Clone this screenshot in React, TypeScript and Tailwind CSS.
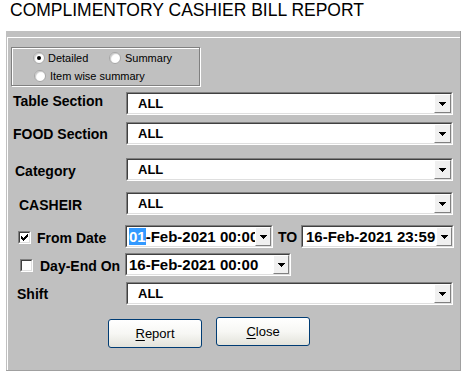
import React from "react";

const FONT = "font-['Liberation_Sans',Arial,sans-serif]";

function Arrow() {
  return (
    <svg width="7" height="4" viewBox="0 0 7 4" shapeRendering="crispEdges">
      <rect x="0" y="0" width="7" height="1" fill="#000" />
      <rect x="1" y="1" width="5" height="1" fill="#000" />
      <rect x="2" y="2" width="3" height="1" fill="#000" />
      <rect x="3" y="3" width="1" height="1" fill="#000" />
    </svg>
  );
}

function DropBtn({ className = "w-[17px]" }: { className?: string }) {
  return (
    <div
      className={`${className} h-full shrink-0 flex items-center justify-center bg-[#f0f0f0] border border-t-white border-l-white border-r-[#808080] border-b-[#808080] pt-[1px]`}
    >
      <Arrow />
    </div>
  );
}

function Combo({
  className,
  children,
  btn,
}: {
  className: string;
  children: React.ReactNode;
  btn?: string;
}) {
  return (
    <div
      className={`${className} h-[23px] shrink-0 flex border border-t-[#808080] border-l-[#808080] border-r-white border-b-white`}
    >
      <div className="flex-1 min-w-0 flex border border-t-[#404040] border-l-[#404040] border-r-[#dfdfdf] border-b-[#dfdfdf] bg-white">
        <div className="flex-1 min-w-0 overflow-hidden whitespace-nowrap flex items-center">
          {children}
        </div>
        <DropBtn className={btn} />
      </div>
    </div>
  );
}

function All() {
  return <span className="pl-[10px] text-[13px] leading-[16px] font-bold text-black">ALL</span>;
}

function Radio({ checked }: { checked?: boolean }) {
  return (
    <span className="w-[12px] h-[12px] shrink-0 rounded-full border border-[#a5a5a5] bg-white shadow-[inset_1px_1px_1px_#c9c9c9] flex items-center justify-center">
      {checked && <span className="w-[4px] h-[4px] rounded-full bg-black" />}
    </span>
  );
}

function Check({ checked }: { checked?: boolean }) {
  return (
    <span className="w-[13px] h-[13px] shrink-0 border border-t-[#808080] border-l-[#808080] border-r-white border-b-white flex">
      <span className="flex-1 border border-t-[#404040] border-l-[#404040] border-r-[#dfdfdf] border-b-[#dfdfdf] bg-white flex items-center justify-center">
        {checked && (
          <svg width="7" height="7" viewBox="0 0 7 7" shapeRendering="crispEdges">
            <path
              d="M0 2h1v3H0zM1 3h1v3H1zM2 4h1v3H2zM3 3h1v3H3zM4 2h1v3H4zM5 1h1v3H5zM6 0h1v3H6z"
              fill="#000"
            />
          </svg>
        )}
      </span>
    </span>
  );
}

function Label({ children, className }: { children: React.ReactNode; className: string }) {
  return (
    <div className={`w-[118px] shrink-0 text-[14px] leading-[16px] font-bold text-black whitespace-nowrap ${className}`}>
      {children}
    </div>
  );
}

function XPButton({
  children,
  className,
}: {
  children: React.ReactNode;
  className: string;
}) {
  return (
    <div
      className={`${className} w-[94px] h-[29px] rounded-[3px] border border-[#003c74] bg-gradient-to-b from-white via-[#f7f7f4] to-[#e3e3db] flex items-center justify-center text-[13px] leading-[16px] text-black`}
    >
      {children}
    </div>
  );
}

export default function App() {
  return (
    <div className={`${FONT} w-[476px] h-[382px] bg-white overflow-hidden`}>
      <div className="h-[31px] pl-[10px] text-[17.5px] leading-[20px] text-black whitespace-nowrap">
        COMPLIMENTORY CASHIER BILL REPORT
      </div>
      <div className="ml-[6px] w-[455px] h-[340px] bg-[#c0c0c0] pt-[6px] border-b border-r border-[#a0a0a0]">
        <div className="ml-[1px] h-full border-t border-l border-white pl-[3px]">
          {/* radio group */}
          <div className="mt-[9px] w-[189px] h-[39px] border border-[#808080] shadow-[inset_1px_1px_0_#fff,1px_1px_0_#fff] pl-[21px] pt-[4px] text-[11px] leading-[13px] text-black">
            <div className="flex items-center h-[12px]">
              <div className="w-[76px] flex items-center gap-[3px]">
                <Radio checked />
                <span>Detailed</span>
              </div>
              <div className="flex items-center gap-[4px]">
                <Radio />
                <span>Summary</span>
              </div>
            </div>
            <div className="flex items-center h-[12px] mt-[6px] gap-[4px] pl-[1px]">
              <Radio />
              <span>Item wise summary</span>
            </div>
          </div>

          {/* Table Section */}
          <div className="mt-[6px] h-[23px] flex items-center -ml-[3px]">
            <Label className="pl-[5px] mb-[6px]">Table Section</Label>
            <Combo className="w-[327px]">
              <All />
            </Combo>
          </div>

          <div className="mt-[7px] h-[23px] flex items-center -ml-[3px]">
            <Label className="pl-[5px]">FOOD Section</Label>
            <Combo className="w-[327px]">
              <All />
            </Combo>
          </div>

          <div className="mt-[13px] h-[23px] flex items-center -ml-[3px]">
            <Label className="pl-[7px] pt-[2px]">Category</Label>
            <Combo className="w-[327px]">
              <All />
            </Combo>
          </div>

          <div className="mt-[11px] h-[23px] flex items-center -ml-[3px]">
            <Label className="pl-[11px] pt-[2px]">CASHEIR</Label>
            <Combo className="w-[327px]">
              <All />
            </Combo>
          </div>

          {/* From date */}
          <div className="mt-[10px] h-[23px] flex items-center -ml-[3px]">
            <div className="w-[117px] shrink-0 flex items-center pl-[10px] gap-[6px] pt-[2px]">
              <Check checked />
              <span className="text-[14px] leading-[16px] font-bold text-black whitespace-nowrap">From Date</span>
            </div>
            <Combo className="w-[148px]" btn="w-[16px]">
              <span className="pl-[2px] text-[15px] leading-[17px] font-bold text-black">
                <span className="bg-[#3399ff] text-white">01</span>-Feb-2021 00:00
              </span>
            </Combo>
            <span className="ml-[5px] w-[19px] text-[14px] leading-[16px] font-bold text-black">TO</span>
            <Combo className="ml-[4px] w-[153px]" btn="w-[16px]">
              <span className="pl-[3px] text-[15px] leading-[17px] font-bold text-black">16-Feb-2021 23:59</span>
            </Combo>
          </div>

          {/* Day-End */}
          <div className="mt-[5px] h-[23px] flex items-center -ml-[3px]">
            <div className="w-[117px] shrink-0 flex items-center pl-[12px] gap-[7px] pt-[2px]">
              <Check />
              <span className="text-[14px] leading-[16px] font-bold text-black whitespace-nowrap">Day-End On</span>
            </div>
            <Combo className="w-[166px]" btn="w-[16px]">
              <span className="pl-[2px] text-[15px] leading-[17px] font-bold text-black">16-Feb-2021 00:00</span>
            </Combo>
          </div>

          {/* Shift */}
          <div className="mt-[6px] h-[23px] flex items-center -ml-[3px]">
            <Label className="pl-[9px]">Shift</Label>
            <Combo className="w-[327px]">
              <All />
            </Combo>
          </div>

          {/* Buttons */}
          <div className="mt-[12px] flex items-start pl-[97px]">
            <XPButton className="mt-[2px]">
              <span>
                <span className="underline underline-offset-2">R</span>eport
              </span>
            </XPButton>
            <XPButton className="ml-[14px]">
              <span>
                <span className="underline underline-offset-2">C</span>lose
              </span>
            </XPButton>
          </div>
        </div>
      </div>
    </div>
  );
}
